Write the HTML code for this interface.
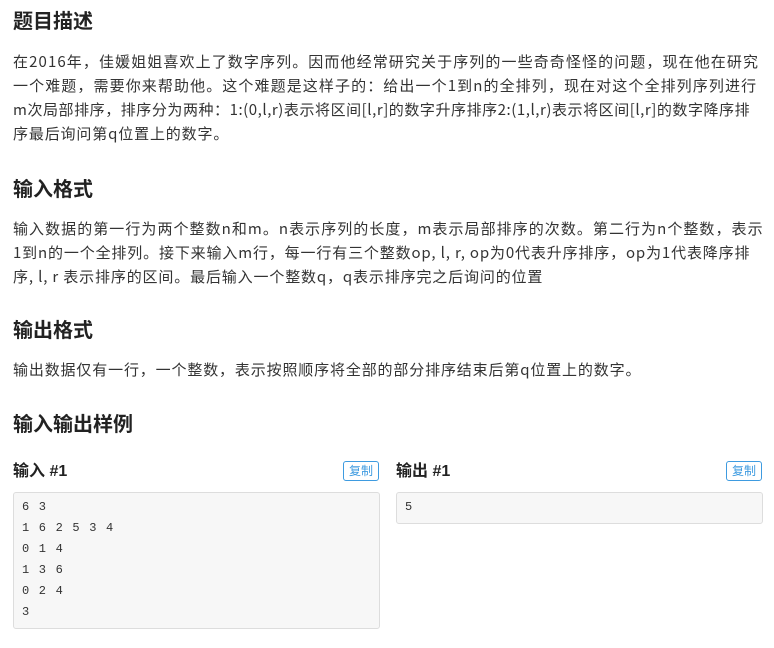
<!DOCTYPE html>
<html><head><meta charset="utf-8"><style>
body{margin:0;background:#fff;color:#333;font-family:"Liberation Sans","Noto Sans CJK SC",sans-serif;width:774px;height:648px;position:relative;overflow:hidden}
h2{position:absolute;left:13px;margin:0;font-size:20px;font-weight:bold;line-height:28px;color:#222}
p{position:absolute;left:13px;width:760px;margin:0;font-size:15px;letter-spacing:0.85px;line-height:24px;color:#333;white-space:nowrap;font-family:"Noto Sans CJK SC",sans-serif}
h3{position:absolute;margin:0;font-size:16px;font-weight:bold;line-height:22px;color:#222}
.btn{position:absolute;width:34px;height:18px;border:1px solid #3e9be0;border-radius:3px;color:#3e9be0;font-size:12px;line-height:18px;text-align:center}
.box{position:absolute;background:#f7f7f7;border:1px solid #ddd;border-radius:3px;box-sizing:border-box;font-family:"Liberation Mono",monospace;font-size:12px;letter-spacing:1.2px;line-height:21px;color:#333;padding:4px 8px;white-space:pre}
</style></head><body>
<h2 style="top:8px">题目描述</h2>
<p style="top:50px"><span style="letter-spacing:1.1px">在2016年，佳媛姐姐喜欢上了数字序列。因而他经常研究关于序列的一些奇奇怪怪的问题，现在他在研究</span><br><span style="letter-spacing:1.1px">一个难题，需要你来帮助他。这个难题是这样子的：给出一个1到n的全排列，现在对这个全排列序列进行</span><br><span style="letter-spacing:0.55px">m次局部排序，排序分为两种：1:(0,l,r)表示将区间[l,r]的数字升序排序2:(1,l,r)表示将区间[l,r]的数字降序排</span><br>序最后询问第q位置上的数字。</p>
<h2 style="top:176px">输入格式</h2>
<p style="top:217px"><span style="letter-spacing:1.05px">输入数据的第一行为两个整数n和m。n表示序列的长度，m表示局部排序的次数。第二行为n个整数，表示</span><br>1到n的一个全排列。接下来输入m行，每一行有三个整数op, l, r, op为0代表升序排序，op为1代表降序排<br>序, l, r 表示排序的区间。最后输入一个整数q，q表示排序完之后询问的位置</p>
<h2 style="top:317px">输出格式</h2>
<p style="top:358px">输出数据仅有一行，一个整数，表示按照顺序将全部的部分排序结束后第q位置上的数字。</p>
<h2 style="top:411px">输入输出样例</h2>
<h3 style="left:13px;top:461px">输入 #1</h3>
<div class="btn" style="left:343px;top:461px">复制</div>
<div class="box" style="left:13px;top:492px;width:367px;height:137px">6 3
1 6 2 5 3 4
0 1 4
1 3 6
0 2 4
3</div>
<h3 style="left:396px;top:461px">输出 #1</h3>
<div class="btn" style="left:726px;top:461px">复制</div>
<div class="box" style="left:396px;top:492px;width:367px;height:32px">5</div>
</body></html>
